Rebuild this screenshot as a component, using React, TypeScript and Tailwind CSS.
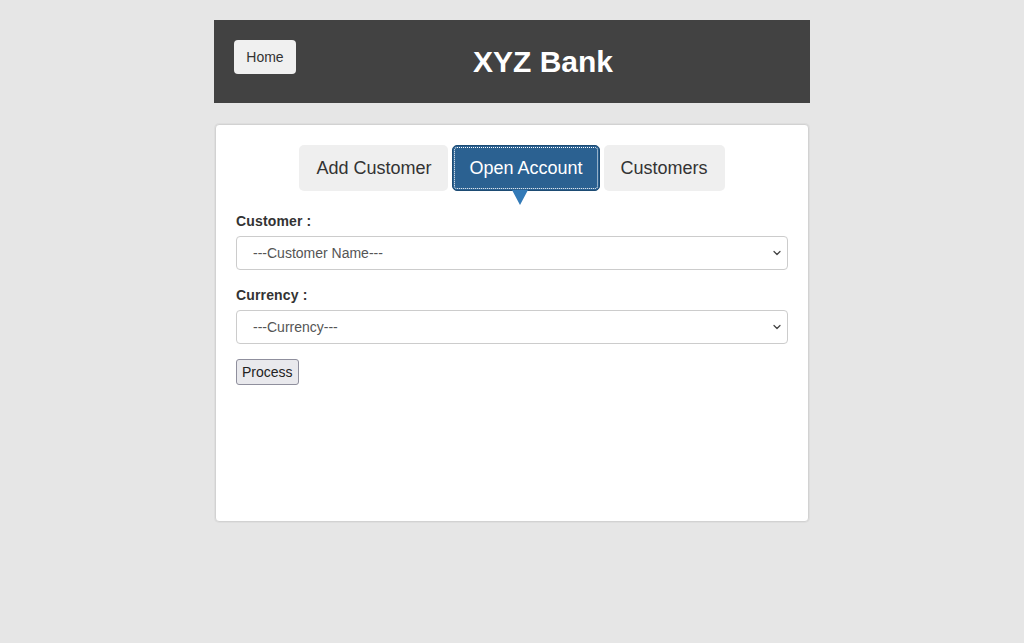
import { ChevronDown } from "lucide-react"

const font = { fontFamily: '"Liberation Sans", Arial, sans-serif' }

function Tab({ label, active }: { label: string; active?: boolean }) {
  if (active) {
    return (
      <div className="relative">
        <button className="h-[46px] px-4 rounded-[5px] border border-[#1d4b73] bg-[#2b6191] text-white text-[18px] outline outline-1 outline-dotted outline-white -outline-offset-[3px]">
          {label}
        </button>
        <div className="absolute left-[60px] top-[45px] w-0 h-0 border-l-[8px] border-r-[8px] border-t-[15px] border-l-transparent border-r-transparent border-t-[#337ab7]" />
      </div>
    )
  }
  return (
    <button className="h-[46px] px-[17px] rounded-[5px] bg-[#efefef] text-[#333] text-[18px]">
      {label}
    </button>
  )
}

function Field({ label, placeholder }: { label: string; placeholder: string }) {
  return (
    <div className="mb-[15px]">
      <label className="block text-[14px] leading-[20px] font-bold tracking-[0.15px] text-[#333] mb-[5px]">{label}</label>
      <div className="relative">
        <select className="w-full h-[34px] appearance-none rounded-[4px] border border-[#ccc] bg-white pl-4 text-[14px] text-[#555]">
          <option>{placeholder}</option>
        </select>
        <ChevronDown size={12} strokeWidth={2.5} className="absolute right-[5px] top-[11px] text-[#444] pointer-events-none" />
      </div>
    </div>
  )
}

export default function App() {
  return (
    <div className="min-h-[643px] bg-[#e6e6e6] pt-5" style={font}>
      <div className="w-[596px] mx-auto">
        <header className="h-[83px] bg-[#424242] flex items-start px-5 pt-5">
          <button className="w-[62px] h-[34px] rounded-[4px] bg-[#f0f0f0] text-[14px] text-[#333]">Home</button>
          <h1 className="flex-1 self-center text-center text-[30px] font-bold text-white -mt-5">XYZ Bank</h1>
        </header>

        <div className="mt-[21px] mx-px h-[398px] bg-white border border-[#d2d2d2] shadow-[0_0_0_1px_#dedede] rounded-[4px] px-5 pt-5">
          <div className="flex justify-center gap-1">
            <Tab label="Add Customer" />
            <Tab label="Open Account" active />
            <Tab label="Customers" />
          </div>

          <div className="mt-5">
            <Field label="Customer :" placeholder="---Customer Name---" />
            <Field label="Currency :" placeholder="---Currency---" />
            <button className="h-[26px] px-[5px] rounded-[3px] border border-[#8f8f9d] bg-[#e9e9ed] text-[14px] text-[#222]">
              Process
            </button>
          </div>
        </div>
      </div>
    </div>
  )
}
